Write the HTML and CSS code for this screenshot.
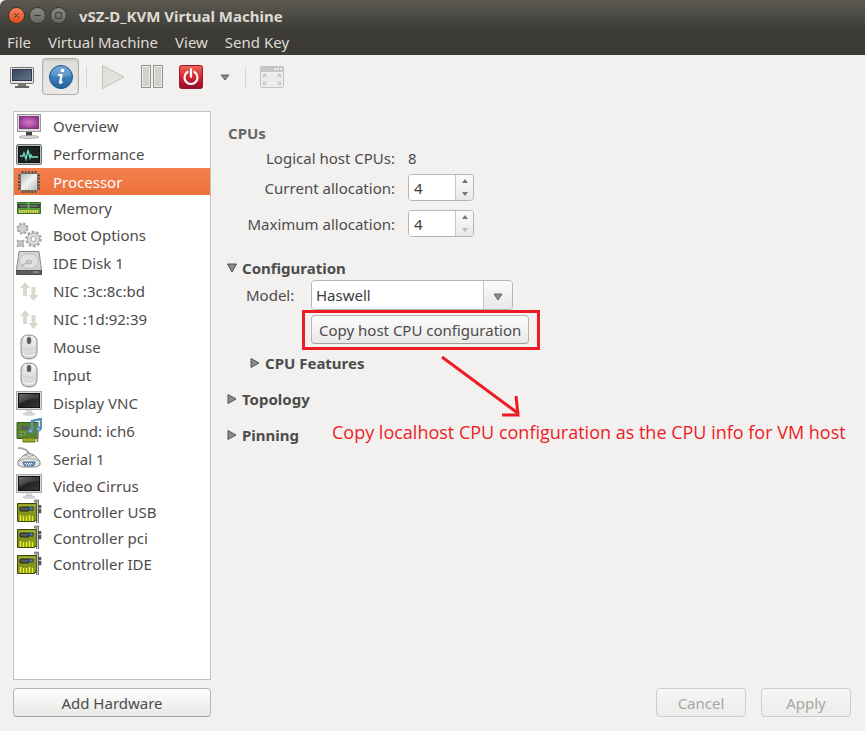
FILE: index.html
```html
<!DOCTYPE html>
<html lang="en">
<head>
<meta charset="utf-8">
<title>vSZ-D_KVM Virtual Machine</title>
<link rel="stylesheet" href="styles.css">
</head>
<body>
<svg class="defs" aria-hidden="true">
  <defs>
    <linearGradient id="g-metal" x1="0" y1="0" x2="1" y2="1"><stop offset="0" stop-color="#b4b6b3"/><stop offset=".5" stop-color="#f2f2f2"/><stop offset="1" stop-color="#b4b6b3"/></linearGradient>
    <linearGradient id="g-light" x1="0" y1="0" x2="0" y2="1"><stop offset="0" stop-color="#f4f5f2"/><stop offset="1" stop-color="#cfd1ce"/></linearGradient>
    <linearGradient id="g-screen" x1="0" y1="0" x2="1" y2="1"><stop offset="0" stop-color="#5a5a5a"/><stop offset=".5" stop-color="#222"/><stop offset="1" stop-color="#3a3a3a"/></linearGradient>
    <radialGradient id="g-purple" r=".7"><stop offset="0" stop-color="#d678cd"/><stop offset="1" stop-color="#83287f"/></radialGradient>
    <linearGradient id="g-blue" x1="0" y1="0" x2="0" y2="1"><stop offset="0" stop-color="#5d9ad6"/><stop offset="1" stop-color="#1f659f"/></linearGradient>
    <linearGradient id="g-red" x1="0" y1="0" x2="0" y2="1"><stop offset="0" stop-color="#ee6a55"/><stop offset=".5" stop-color="#d42332"/><stop offset="1" stop-color="#8f0d2c"/></linearGradient>
    <linearGradient id="g-slate" x1="0" y1="0" x2="1" y2="1"><stop offset="0" stop-color="#35445a"/><stop offset="1" stop-color="#66768c"/></linearGradient>
  </defs>
  <symbol id="i-monitor" viewBox="0 0 26 26">
    <rect x=".5" y="1.500" width="25" height="18" fill="#d8d8d6" stroke="#aaa"/>
    <rect x="2.500" y="3.500" width="21" height="14" fill="url(#g-screen)" stroke="#111"/>
    <path d="M3 4h20v4Q12 9 3 13z" fill="#fff" opacity=".12"/>
    <path d="M10 20h6v3h-6z" fill="#ddd"/><ellipse cx="13" cy="24" rx="6" ry="1.200" fill="#dededc" stroke="#aaa" stroke-width=".6"/>
  </symbol>
  <symbol id="i-arrows" viewBox="0 0 26 26">
    <path d="M9 4l5 6h-3v8H7v-8H4zM17.500 23l-5-6h3V9h4v8h3z" fill="#dbd7cd"/>
  </symbol>
  <symbol id="i-mouse" viewBox="0 0 26 26">
    <path d="M5 8Q5 1 13 1t8 7v9q0 8-8 8t-8-8z" fill="url(#g-light)" stroke="#8c8c8a"/>
    <path d="M6 12q1 3 4 3h6q3 0 4-3M8 2q-2 3-1 8" fill="none" stroke="#c5c5c3" stroke-width=".8"/>
    <rect x="11" y="3" width="4" height="7" rx="2" fill="#555" stroke="#888" stroke-width=".6"/>
    <path d="M7 20q6 4 12 0" fill="none" stroke="#fff"/>
  </symbol>
  <symbol id="i-card" viewBox="0 0 26 26">
    <path d="M1.500 4.500h19v17h-2v1h-17z" fill="#83951b" stroke="#3d450b"/>
    <path d="M2.500 5.500h17v2h-17z" fill="#a6b52c"/>
    <rect x="4" y="8" width="9" height="4" rx="1" fill="#55585a" stroke="#222"/><rect x="13" y="8" width="4" height="3" fill="#4d80ad" stroke="#27445f"/>
    <path d="M4.500 22v-6M7.500 22v-5M10.500 22v-5M13.500 22v-6M16.500 22v-5" stroke="#ecec2c" stroke-width="1.500"/>
    <path d="M18 2h3.500v22M24 6v2h-2M24 10v3h-2" fill="none" stroke="#555752" stroke-width="2.600"/><path d="M18 2h3.500v22" fill="none" stroke="#c8cac6"/>
  </symbol>
</svg>

<header class="chrome">
  <div class="titlebar">
    <button class="winbtn close" aria-label="Close"><svg viewBox="0 0 16 16"><path d="M5.500 5.500l5 5M10.500 5.500l-5 5"/></svg></button>
    <button class="winbtn" aria-label="Minimize"><svg viewBox="0 0 16 16"><path d="M4.500 8h7"/></svg></button>
    <button class="winbtn" aria-label="Maximize"><svg viewBox="0 0 16 16"><path d="M5 5h6v6H5z"/></svg></button>
    <h1>vSZ-D_KVM Virtual Machine</h1>
  </div>
  <nav class="menubar">
    <button>File</button><button>Virtual Machine</button><button>View</button><button>Send Key</button>
  </nav>
</header>

<div class="toolbar" role="toolbar" aria-label="Machine controls">
  <button class="tool" aria-label="Console"><svg width="26" height="26" viewBox="0 0 26 26"><rect x="1.500" y="3.500" width="23" height="16" rx="1" fill="#e4e5e3" stroke="#71736f"/><rect x="3.500" y="5.500" width="19" height="11" fill="url(#g-slate)" stroke="#2e3a4b"/><path d="M9 20h8v2H9z" fill="#777"/><path d="M6 23h14" stroke="#666" stroke-width="2"/></svg></button>
  <button class="tool pressed" aria-label="Details"><svg width="26" height="26" viewBox="0 0 26 26"><circle cx="13" cy="13" r="11.500" fill="url(#g-blue)" stroke="#205887"/><path d="M3 11a10 9 0 0 1 20 0q-8 4-20 0" fill="#fff" opacity=".16"/><circle cx="14.500" cy="6.500" r="1.800" fill="#fff"/><path d="M10 11h3.500L12 18.500q0 1 2.500-.8" fill="none" stroke="#fff" stroke-width="2.200"/></svg></button>
  <span class="sep"></span>
  <button class="tool play" aria-label="Run" disabled><svg width="26" height="26" viewBox="0 0 26 26"><path d="M2.500 1.500v23L24 13z" fill="#dfe1dc" stroke="#bfc2bd"/></svg></button>
  <button class="tool" aria-label="Pause"><svg width="26" height="26" viewBox="0 0 26 26"><path d="M2.500 1.500h9v22h-9zM14.500 1.500h9v22h-9z" fill="#cfd2cd" stroke="#8d918b"/><path d="M3.500 2.500h7v20h-7zM15.500 2.500h7v20h-7z" fill="none" stroke="#fff" opacity=".6"/></svg></button>
  <button class="tool" aria-label="Shut down"><svg width="26" height="26" viewBox="0 0 26 26"><rect x="1.500" y="1.500" width="23" height="23" rx="2" fill="url(#g-red)" stroke="#9c1728"/><path d="M9.500 8a6.500 6.500 0 1 0 7 0M13 5v8" fill="none" stroke="#fff" stroke-width="2.200" stroke-linecap="round"/></svg></button>
  <button class="tool drop" aria-label="Shut down options"><svg width="10" height="8" viewBox="0 0 10 8"><path d="M1 2h8L5 7z" fill="#888" stroke="#666"/></svg></button>
  <span class="sep"></span>
  <button class="tool" aria-label="Fullscreen" disabled><svg width="26" height="26" viewBox="0 0 26 26"><rect x="1.500" y="2.500" width="23" height="21" rx="1" fill="#ededeb" stroke="#c3c3c1"/><path d="M2 3h22v5H2z" fill="#c7c7c5"/><path d="M15 5h2M18 5h2M21 5h2" stroke="#eee" stroke-width="2"/><path d="M4 14v-4h4zM18 10h4v4zM4 17v4h4zM22 17v4h-4z" fill="#c3c3c1"/><path d="M5 11l3 3M21 11l-3 3M5 20l3-3M21 20l-3-3" stroke="#c3c3c1"/></svg></button>
</div>

<div class="workspace">
  <aside class="sidebar">
    <ul class="hardware">
      <li><button><svg viewBox="0 0 26 26"><rect x="1.500" y="1.500" width="23" height="17" fill="#dededc" stroke="#999"/><rect x="3.500" y="3.500" width="19" height="12" fill="url(#g-purple)" stroke="#7b3a80"/><path d="M10 19h6v4h-6z" fill="#444"/><ellipse cx="13" cy="24" rx="10" ry="1.500" fill="#d8d8d8" stroke="#999" stroke-width=".7"/></svg>Overview</button></li>
      <li><button><svg viewBox="0 0 26 26"><rect x=".5" y="3.500" width="25" height="20" rx="1.500" fill="#bfc1be" stroke="#747672"/><rect x="2.500" y="5.500" width="21" height="16" fill="#1c2423" stroke="#0d1110"/><path d="M4 15h3l1-3 2 6 2-9 2 8 1-3 1 2h6" fill="none" stroke="#76e5c8" stroke-width="1.300"/></svg>Performance</button></li>
      <li class="medium selected"><button><svg viewBox="0 0 26 26"><path d="M6.500 2v22M9.700 2v22M13 2v22M16.300 2v22M19.500 2v22M2 6.500h22M2 9.700h22M2 13h22M2 16.300h22M2 19.500h22" stroke="#4c4e4b" stroke-width="1.800"/><rect x="4.500" y="4.500" width="17" height="17" rx="1" fill="url(#g-metal)" stroke="#6b6d69"/></svg>Processor</button></li>
      <li class="short"><button><svg viewBox="0 0 26 26"><path d="M1.500 7.500h23v11h-23z" fill="#579c45" stroke="#376b29"/><path d="M2 9h22v4H2z" fill="#3e453e"/><path d="M4 11h18" stroke="#8b918a"/><path d="M12.500 7v8" stroke="#4dbb39" stroke-width="2"/><path d="M3 16.500h20" stroke="#e9db4c" stroke-width="3" stroke-dasharray="1.500 .7"/></svg>Memory</button></li>
      <li><button><svg viewBox="0 0 26 26" fill="none" stroke="#a5a5a3"><circle cx="6.500" cy="6.500" r="5" stroke-width="2" stroke-dasharray="2.500 1.400"/><circle cx="6.500" cy="6.500" r="4" fill="#ddd"/><circle cx="6.500" cy="6.500" r="1.500" fill="#fff"/><circle cx="17.500" cy="17" r="7.300" stroke-width="2" stroke-dasharray="2.800 1.800"/><circle cx="17.500" cy="17" r="6" fill="#ddd"/><circle cx="17.500" cy="17" r="2.500" fill="#fff"/><path d="M1 18l2 1h2l3-1-1 3 1 4-3-1H3l-2 1 1-4z" fill="#ccc"/><circle cx="4.500" cy="21.500" r="1" fill="#fff"/></svg>Boot Options</button></li>
      <li><button><svg viewBox="0 0 26 26"><path d="M3 1.500h20l2.500 18v5H.5v-5z" fill="#d3d4d2" stroke="#8a8c88"/><path d="M.5 20.500h25v4H.5z" fill="#5e605d" stroke="#494b48"/><ellipse cx="13" cy="11" rx="9.500" ry="7.500" fill="#e1e2e0" stroke="#c0c1bf"/><ellipse cx="13" cy="12" rx="3" ry="2" fill="#ccc" stroke="#aaa" stroke-width=".7"/><path d="M5 16l7-4" stroke="#bbb" stroke-width="1.500"/><path d="M17 22h6" stroke="#aaa"/></svg>IDE Disk 1</button></li>
      <li><button><svg><use href="#i-arrows"/></svg>NIC :3c:8c:bd</button></li>
      <li><button><svg><use href="#i-arrows"/></svg>NIC :1d:92:39</button></li>
      <li><button><svg><use href="#i-mouse"/></svg>Mouse</button></li>
      <li><button><svg><use href="#i-mouse"/></svg>Input</button></li>
      <li><button><svg><use href="#i-monitor"/></svg>Display VNC</button></li>
      <li><button><svg viewBox="0 0 26 26"><path d="M1 4.500h21v16H1z" fill="#568435" stroke="#365c22"/><path d="M21.500 5v19" stroke="#777" stroke-width="1.500"/><rect x="5" y="8" width="8" height="4" fill="#5b5d5b"/><path d="M3 14h6v3M3 17h4" fill="none" stroke="#82ad57"/><path d="M7 20h12v4H7z" fill="#bebe25" stroke="#65701c"/><path d="M10 20v4M13 20v4M16 20v4" stroke="#65701c"/><path d="M16 13V3l9-2v10" fill="none" stroke="#5e93b5" stroke-width="2.500"/><ellipse cx="14.500" cy="13" rx="2.500" ry="2" fill="#80b1cc" stroke="#477d9f"/><ellipse cx="22.500" cy="11" rx="2.500" ry="2" fill="#80b1cc" stroke="#477d9f"/></svg>Sound: ich6</button></li>
      <li class="medium"><button><svg viewBox="0 0 26 26"><path d="M2 2q9 0 11 6" fill="none" stroke="#aaa" stroke-width="2"/><path d="M8 9l5-2 5 2 6 6v4l-4 2H6l-4-2v-4z" fill="#e2e3e1" stroke="#898b87"/><path d="M2.500 15Q13 10 23.500 15M8 9q5 3 10 0" fill="none" stroke="#aaa"/><path d="M7 16h12l-1.500 4h-9z" fill="#6e9bc4" stroke="#456c91"/><path d="M9 17.500h8M10 19h6" stroke="#fff" stroke-dasharray="1 1"/></svg>Serial 1</button></li>
      <li class="medium"><button><svg><use href="#i-monitor"/></svg>Video Cirrus</button></li>
      <li class="short"><button><svg><use href="#i-card"/></svg>Controller USB</button></li>
      <li class="short"><button><svg><use href="#i-card"/></svg>Controller pci</button></li>
      <li class="short"><button><svg><use href="#i-card"/></svg>Controller IDE</button></li>
    </ul>
    <button class="btn">Add Hardware</button>
  </aside>

  <main class="details">
    <section class="cpus">
      <h2>CPUs</h2>
      <div class="fields">
        <span class="label">Logical host CPUs:</span><span>8</span>
        <label class="label" for="cur">Current allocation:</label>
        <div class="spin"><input id="cur" value="4"><div class="steps"><button aria-label="Increase current"><i class="up"></i></button><button aria-label="Decrease current"><i class="down"></i></button></div></div>
        <label class="label" for="max">Maximum allocation:</label>
        <div class="spin"><input id="max" value="4"><div class="steps"><button aria-label="Increase maximum"><i class="up"></i></button><button aria-label="Decrease maximum" disabled><i class="down"></i></button></div></div>
      </div>
    </section>

    <details open class="config">
      <summary><svg class="tri" viewBox="0 0 10 10"><path d="M.5 1h9L5 9z"/></svg>Configuration</summary>
      <div class="model">
        <label for="model">Model:</label>
        <div class="combo"><input id="model" value="Haswell"><button aria-label="Show models"><svg width="10" height="8" viewBox="0 0 10 8"><path d="M1 1h8L5 7z" fill="#888" stroke="#666"/></svg></button></div>
        <div class="marked">
          <button class="btn">Copy host CPU configuration</button>
          <span class="frame"></span>
          <svg class="pointer" width="82" height="64" viewBox="0 0 82 64"><path d="M2 2l77 57M76 41l2 19H62" /></svg>
          <p class="note">Copy localhost CPU configuration as the CPU info for VM host</p>
        </div>
      </div>
      <details class="nested"><summary><svg class="tri" viewBox="0 0 10 10"><path d="M1 .5v9L9 5z"/></svg>CPU Features</summary></details>
    </details>
    <details><summary><svg class="tri" viewBox="0 0 10 10"><path d="M1 .5v9L9 5z"/></svg>Topology</summary></details>
    <details><summary><svg class="tri" viewBox="0 0 10 10"><path d="M1 .5v9L9 5z"/></svg>Pinning</summary></details>

    <footer class="actions">
      <button class="btn" disabled>Cancel</button>
      <button class="btn" disabled>Apply</button>
    </footer>
  </main>
</div>
</body>
</html>
```
FILE: styles.css
```css
* { box-sizing: border-box; }

body {
  margin: 0;
  min-height: 100vh;
  display: flex;
  flex-direction: column;
  background: #f2f1f0;
  color: #4c4c4c;
  font: 15px/20px "Noto Sans", "Open Sans", sans-serif;
}

button, input { font: inherit; color: inherit; }
button { padding: 0; border: 0; background: none; }
input { min-width: 0; border: 0; outline: 0; background: #fff; color: #3c3c3c; }
.defs { position: absolute; width: 0; height: 0; }

.chrome {
  height: 55px;
  background: linear-gradient(#5a5850, #3c3b37 32px);
  color: #dfdbd2;
  border-top-left-radius: 6px;
}
.titlebar { display: flex; align-items: center; gap: 4px; height: 31px; padding-left: 8px; }
.titlebar h1 { margin: 0 0 0 8px; font-size: 15px; line-height: 20px; }
.winbtn {
  width: 17px;
  height: 17px;
  border: 1px solid #35342f;
  border-radius: 50%;
  background: linear-gradient(#8b8a82, #66655f);
}
.winbtn svg { display: block; width: 15px; height: 15px; fill: none; stroke: #35342f; stroke-width: 1; }
.winbtn.close { background: linear-gradient(#f5825c, #df4c1c); }
.menubar { display: flex; gap: 17px; padding: 1px 7px; }

.toolbar { display: flex; align-items: center; height: 43px; padding-left: 2px; }
.tool { display: flex; align-items: center; justify-content: center; width: 39px; height: 37px; }
.tool.pressed { width: 37px; margin: 0 1px; border: 1px solid #b0aeab; border-radius: 4px; background: linear-gradient(#dddcda, #ebeae9); box-shadow: inset 0 1px 2px #c6c4c1; }
.tool.play { width: 39px; }
.tool.drop { width: 29px; }
.sep { width: 1px; height: 22px; margin: 0 6px; background: #d8d6d3; }

.workspace { flex: 1; display: flex; gap: 16px; padding: 13px 14px 14px 13px; }
.sidebar { flex: 0 0 198px; display: flex; flex-direction: column; gap: 8px; }
.hardware { flex: 1; margin: 0; padding: 0; list-style: none; background: #fff; border: 1px solid #c6c2bd; }
.hardware button { display: flex; align-items: center; gap: 11px; width: 100%; height: 28px; padding-left: 2px; text-align: left; }
.hardware svg { width: 26px; height: 26px; }
.hardware .medium button { height: 27px; }
.hardware .short button { height: 26px; }
.selected { background: linear-gradient(#f4804f, #ec7039); color: #fff; }

.btn {
  height: 29px;
  border: 1px solid #b8b5b1;
  border-bottom-color: #a3a09c;
  border-radius: 4px;
  background: linear-gradient(#fdfdfd, #e9e8e7);
}
.btn:disabled { color: #a8a6a4; border-color: #cfcdca; background: linear-gradient(#f6f6f5, #edecea); }

.details { flex: 1; display: flex; flex-direction: column; padding-top: 12px; }
h2 { margin: 0 1px; font-size: 15px; line-height: 20px; color: #666; }
.fields { display: grid; grid-template: 14px 27px 27px / 168px 1fr; gap: 9px 13px; align-items: center; margin-top: 8px; }
.label { text-align: right; }
.spin { display: flex; width: 66px; height: 27px; border: 1px solid #b8b5b1; border-radius: 4px; overflow: hidden; }
.spin input { flex: 1; padding: 0 5px; }
.steps { display: flex; flex-direction: column; width: 18px; border-left: 1px solid #c9c6c2; background: linear-gradient(#fbfbfb, #e9e8e7); }
.steps button { flex: 1; display: flex; align-items: center; justify-content: center; }
.up, .down { border: 3px solid transparent; }
.up { border-bottom: 4px solid #777; border-top: 0; }
.down { border-top: 4px solid #777; border-bottom: 0; }
:disabled .down { border-top-color: #bbb; }

details { margin-top: 16px; }
.config { margin-top: 21px; }
summary { display: flex; align-items: center; gap: 5px; list-style: none; font-weight: bold; }
summary::-webkit-details-marker { display: none; }
.tri { width: 10px; height: 10px; fill: #8b8b8b; stroke: #555; }
.nested { margin: 9px 0 0 23px; }
.model { display: grid; grid-template-columns: 52px 1fr; column-gap: 13px; row-gap: 5px; align-items: center; margin: 2px 0 0 19px; }
.combo { display: flex; width: 202px; height: 30px; border: 1px solid #b8b5b1; border-radius: 4px; overflow: hidden; }
.combo input { flex: 1; padding: 0 4px; }
.combo button { width: 29px; border-left: 1px solid #c9c6c2; background: linear-gradient(#fbfbfb, #e9e8e7); }

.marked { grid-column: 2; position: relative; justify-self: start; }
.marked .btn { display: block; padding: 0 7px; }
.frame { position: absolute; inset: -5px -11px -6px -9px; border: 3px solid #ed1c24; pointer-events: none; }
.pointer { position: absolute; top: 40px; left: 129px; fill: none; stroke: #ed1c24; stroke-width: 3; }
.note { position: absolute; top: 105px; left: 21px; margin: 0; font: 18px/24px "Open Sans", sans-serif; color: #ed1c24; white-space: nowrap; }

.actions { display: flex; justify-content: flex-end; gap: 15px; margin-top: auto; }
.actions .btn { width: 90px; }
```
